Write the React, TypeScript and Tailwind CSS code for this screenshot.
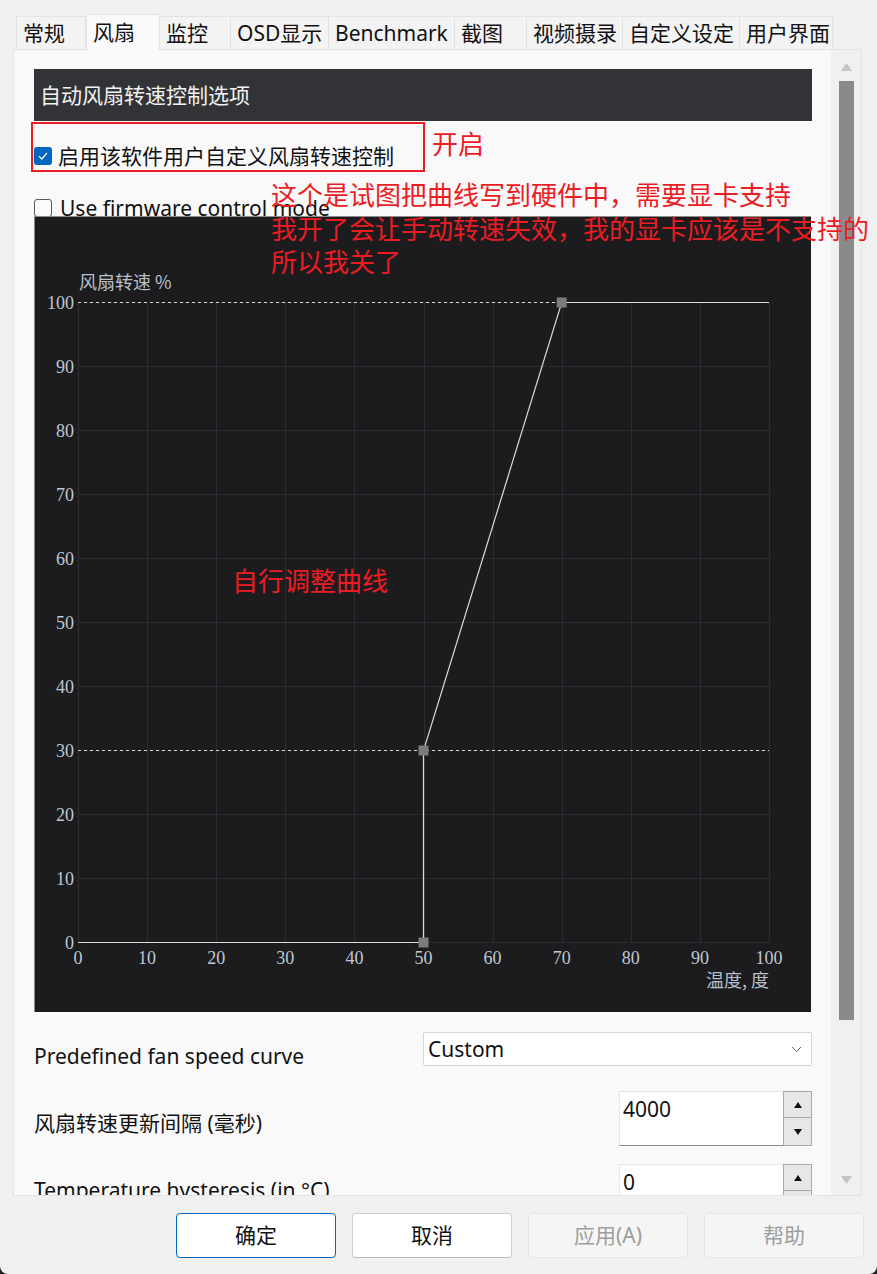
import React from "react"

const tabs = [
  { label: "常规", w: "w-[70px]" },
  { label: "风扇", w: "w-[74px]", active: true },
  { label: "监控", w: "w-[71px]" },
  { label: "OSD显示", w: "w-[98px]" },
  { label: "Benchmark", w: "w-[126px]" },
  { label: "截图", w: "w-[72px]" },
  { label: "视频摄录", w: "w-[96px]" },
  { label: "自定义设定", w: "w-[117px]" },
  { label: "用户界面", w: "w-[93px]" },
]

const font = "font-['Noto_Sans','Noto_Sans_CJK_SC',sans-serif]"

// chart geometry, relative to the dark box
const X0 = 43
const DX = 69.1
const Y0 = 85
const DY = 64
const px = (t: number) => X0 + (t / 10) * DX
const py = (v: number) => Y0 + ((100 - v) / 10) * DY

function FanChart() {
  const ticks = Array.from({ length: 11 }, (_, i) => i * 10)
  const curve = [
    [0, 0],
    [50, 0],
    [50, 30],
    [70, 100],
    [100, 100],
  ]
  const markers = [
    [50, 0],
    [50, 30],
    [70, 100],
  ]
  return (
    <div className="mt-[-1px] h-[796px] w-[777px] shrink-0 bg-[#1c1c1e] border-t border-l border-[#8c8c8c]">
      <svg width="777" height="796" className="block">
        {ticks.map((t) => (
          <line key={"v" + t} x1={Math.round(px(t)) + 0.5} x2={Math.round(px(t)) + 0.5} y1={Y0} y2={py(0)} stroke="#2d2d31" shapeRendering="crispEdges" />
        ))}
        {ticks.map((v) => (
          <line key={"h" + v} x1={X0} x2={px(100)} y1={py(v) + 0.5} y2={py(v) + 0.5} stroke="#2d2d31" shapeRendering="crispEdges" />
        ))}
        <line x1={X0} x2={px(100)} y1={py(100) + 0.5} y2={py(100) + 0.5} stroke="#d6d6d6" strokeDasharray="3 3" shapeRendering="crispEdges" />
        <line x1={X0} x2={px(100)} y1={py(30) + 0.5} y2={py(30) + 0.5} stroke="#d6d6d6" strokeDasharray="3 3" shapeRendering="crispEdges" />
        <polyline
          points={curve.map(([t, v]) => `${px(t)},${py(v) + 0.5}`).join(" ")}
          fill="none"
          stroke="#dcdcdc"
          strokeWidth="1.2"
        />
        {markers.map(([t, v]) => (
          <rect key={t + "-" + v} x={px(t) - 5} y={py(v) - 4.5} width="10" height="10" fill="#7b7b7b" />
        ))}
        {ticks.map((v) => (
          <text
            key={"yl" + v}
            x={39}
            y={py(v) + 1}
            textAnchor="end"
            dominantBaseline="central"
            fill="#bfc8d3"
            fontSize="18"
            fontFamily="'Liberation Serif', serif"
          >
            {v}
          </text>
        ))}
        {ticks.map((t) => (
          <text
            key={"xl" + t}
            x={px(t)}
            y={741}
            textAnchor="middle"
            dominantBaseline="central"
            fill="#bfc8d3"
            fontSize="18"
            fontFamily="'Liberation Serif', serif"
          >
            {t}
          </text>
        ))}
        <text x={44} y={64} dominantBaseline="central" fill="#b7c1cd" fontSize="18" fontFamily="'Noto Sans CJK SC', sans-serif">
          风扇转速 %
        </text>
        <text x={734} y={762} textAnchor="end" dominantBaseline="central" fill="#b7c1cd" fontSize="18" fontFamily="'Noto Sans CJK SC', sans-serif">
          温度, 度
        </text>
      </svg>
    </div>
  )
}

function SpinBox({ value }: { value: string }) {
  return (
    <div className="flex h-[55px] w-[193px] shrink-0">
      <div className="flex-1 bg-white border-t border-l border-[#e6e6e6] border-b border-b-[#8a8a8a] pl-[3px] pt-[4px] text-[21px] leading-[26px]">
        {value}
      </div>
      <div className="flex w-[29px] flex-col">
        <div className="flex h-[27px] items-center justify-center border border-[#a9a9a9] bg-[#e7e7e7]">
          <svg width="8" height="6" viewBox="0 0 8 6">
            <path d="M4 0 L8 6 L0 6 Z" fill="#111" />
          </svg>
        </div>
        <div className="flex h-[28px] items-center justify-center border border-t-0 border-[#a9a9a9] bg-[#e7e7e7]">
          <svg width="8" height="6" viewBox="0 0 8 6">
            <path d="M0 0 L8 0 L4 6 Z" fill="#111" />
          </svg>
        </div>
      </div>
    </div>
  )
}

export default function App() {
  return (
    <div className={`w-[877px] h-[1274px] bg-[#202020] ${font} text-[#111]`}>
      <div className="relative flex h-full flex-col rounded-b-[8px] bg-[#f0f0f0]">
        {/* tab strip */}
        <div className="flex shrink-0 items-end pl-[16px] pt-[14px]">
          {tabs.map((t) =>
            t.active ? (
              <div
                key={t.label}
                className={`${t.w} relative z-10 -mb-px flex h-[36px] items-center border-x border-t border-[#e3e3e3] bg-[#f9f9f9] pl-[6px] text-[21px] leading-none`}
              >
                {t.label}
              </div>
            ) : (
              <div
                key={t.label}
                className={`${t.w} flex h-[33px] items-center border-t border-r border-[#e3e3e3] bg-[#f3f3f3] pl-[6px] text-[21px] leading-none first:border-l`}
              >
                {t.label}
              </div>
            ),
          )}
        </div>

        {/* tab panel */}
        <div className="ml-[13px] mr-[15px] flex h-[1147px] shrink-0 border border-[#e3e3e3] bg-[#f9f9f9]">
          <div className="flex flex-1 flex-col overflow-hidden pl-[20px] pr-[19px] pt-[19px]">
            <div className="flex h-[52px] shrink-0 items-center bg-[#323337] pl-[6px] text-[21px] leading-none text-[#f2f2f2]">
              自动风扇转速控制选项
            </div>

            <div className="mt-[26px] flex h-[18px] shrink-0 items-center gap-[6px]">
              <div className="flex h-[18px] w-[18px] items-center justify-center rounded-[3px] bg-[#0067c0]">
                <svg width="10" height="8" viewBox="0 0 10 8">
                  <path d="M1 4.2 L3.8 7 L9 1" fill="none" stroke="#fff" strokeWidth="1.2" />
                </svg>
              </div>
              <span className="text-[21px] leading-none">启用该软件用户自定义风扇转速控制</span>
            </div>

            <div className="mt-[34px] flex h-[18px] shrink-0 items-center gap-[8px]">
              <div className="h-[18px] w-[18px] rounded-[3px] border border-[#5c5c5c] bg-[#fbfbfb]" />
              <span className="text-[21px] leading-none">Use firmware control mode</span>
            </div>

            <FanChart />

            <div className="mt-[20px] flex h-[48px] shrink-0 justify-between">
              <span className="pt-[12px] text-[21px] leading-[24px]">Predefined fan speed curve</span>
              <div className="flex h-[34px] w-[389px] items-center justify-between rounded-[2px] border border-[#d6d6d6] bg-white pl-[4px] pr-[9px]">
                <span className="text-[21px] leading-none">Custom</span>
                <svg width="11" height="7" viewBox="0 0 11 7">
                  <path d="M1 1 L5.5 5.5 L10 1" fill="none" stroke="#666" strokeWidth="1" />
                </svg>
              </div>
            </div>

            <div className="mt-[11px] flex h-[64px] shrink-0 justify-between">
              <span className="pt-[20px] text-[21px] leading-[24px]">风扇转速更新间隔 (毫秒)</span>
              <SpinBox value="4000" />
            </div>

            <div className="mt-[9px] flex h-[60px] shrink-0 justify-between">
              <span className="pt-[14px] text-[21px] leading-[24px]">Temperature hysteresis (in °C)</span>
              <SpinBox value="0" />
            </div>
          </div>

          {/* scrollbar */}
          <div className="flex w-[30px] flex-col items-center bg-[#f0f0f0] pt-[13px] pb-[11px]">
            <svg width="11" height="8" viewBox="0 0 11 8" className="shrink-0">
              <path d="M5.5 0 L11 8 L0 8 Z" fill="#c4c4c4" />
            </svg>
            <div className="mt-[10px] h-[939px] w-[15px] shrink-0 bg-[#8a8a8a]" />
            <div className="mt-auto">
              <svg width="11" height="8" viewBox="0 0 11 8">
                <path d="M0 0 L11 0 L5.5 8 Z" fill="#c4c4c4" />
              </svg>
            </div>
          </div>
        </div>

        {/* dialog buttons */}
        <div className="mt-[17px] flex shrink-0 gap-[16px] pl-[176px]">
          <button className="h-[45px] w-[160px] rounded-[4px] border border-[#0067c0] bg-white text-[21px] leading-none">
            确定
          </button>
          <button className="h-[45px] w-[160px] rounded-[4px] border border-[#d0d0d0] border-b-[#b8b8b8] bg-white text-[21px] leading-none">
            取消
          </button>
          <button className="h-[45px] w-[160px] rounded-[4px] border border-[#e5e5e5] bg-[#f5f5f5] text-[21px] leading-none text-[#9d9d9d]">
            应用(A)
          </button>
          <button className="h-[45px] w-[160px] rounded-[4px] border border-[#e5e5e5] bg-[#f5f5f5] text-[21px] leading-none text-[#9d9d9d]">
            帮助
          </button>
        </div>

        {/* red annotations drawn over the dialog */}
        <div className="pointer-events-none absolute left-[31px] top-[122px] h-[50px] w-[394px] border-2 border-[#ec1c24]" />
        <div className="absolute left-[432px] top-[126px] text-[26px] leading-[33px] text-[#ec1c24] font-['Noto_Sans_CJK_SC',sans-serif]">
          开启
        </div>
        <div className="absolute left-[271px] top-[177px] text-[26px] leading-[33.5px] text-[#ec1c24] font-['Noto_Sans_CJK_SC',sans-serif] whitespace-nowrap">
          <div>这个是试图把曲线写到硬件中，需要显卡支持</div>
          <div>我开了会让手动转速失效，我的显卡应该是不支持的</div>
          <div>所以我关了</div>
        </div>
        <div className="absolute left-[232px] top-[563px] text-[26px] leading-[33px] text-[#ec1c24] font-['Noto_Sans_CJK_SC',sans-serif]">
          自行调整曲线
        </div>
      </div>
    </div>
  )
}
